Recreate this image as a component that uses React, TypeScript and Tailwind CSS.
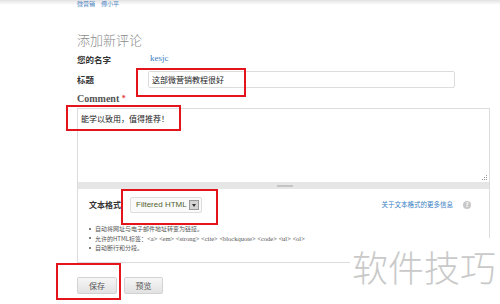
import React from "react";

const cjk = '"Noto Sans CJK SC", "Noto Sans", sans-serif';

const RedBox = ({ className }: { className: string }) => (
    <div className={`absolute border-2 border-[#e3141c] pointer-events-none ${className}`} />
);

const Row = ({ label, children, className = "" }: { label: string; children: React.ReactNode; className?: string }) => (
    <div className={`flex items-center ${className}`}>
        <div className="w-[71px] text-[8.5px] font-bold text-[#333]">{label}</div>
        {children}
    </div>
);

const App = () => {
    return (
        <div className="relative w-[500px] h-[304px] overflow-hidden bg-white" style={{ fontFamily: cjk }}>
            <div className="absolute left-0 top-0 w-full h-[5px] bg-gradient-to-b from-[#e2e2e2] to-white" />

            <div className="relative pl-[77px] pr-[10px]">
                <div className="h-[8px] leading-[8px] text-[6px] text-[#4a7fc1] flex items-center gap-[6px]">
                    <span>微营销</span>
                    <span>傅小平</span>
                </div>

                <h2 className="mt-[25px] text-[13px] leading-[14px] font-light text-[#8a8a8a]">添加新评论</h2>

                <Row label="您的名字" className="mt-[6px] h-[12px]">
                    <span className="ml-[2px] text-[9px] text-[#3b7fc4]" style={{ fontFamily: '"Liberation Serif", serif' }}>kesjc</span>
                </Row>

                <Row label="标题" className="mt-[6px] h-[17px]">
                    <div className="w-[307px] h-[17px] border border-[#dcdcdc] rounded-[2px] flex items-center pl-[3px] text-[8px] text-[#222]">
                        这部微营销教程很好
                    </div>
                </Row>

                <div className="mt-[5px] h-[12px] leading-[12px] text-[10px] font-bold text-[#555]" style={{ fontFamily: '"Liberation Serif", serif' }}>
                    Comment <span className="text-[#e0403a] text-[8px] align-top">*</span>
                </div>

                <div className="mt-[3px] w-[413px]">
                    <div className="relative h-[74px] border border-[#dcdcdc] border-b-0 pl-[3px] pt-[4px] text-[8px] text-[#222]">
                        能学以致用，值得推荐！
                        <div className="absolute right-[2px] bottom-[2px] grid grid-cols-3 gap-[1px]">
                            <span className="w-[1px] h-[1px]" />
                            <span className="w-[1px] h-[1px]" />
                            <span className="w-[1px] h-[1px] bg-[#999]" />
                            <span className="w-[1px] h-[1px]" />
                            <span className="w-[1px] h-[1px] bg-[#999]" />
                            <span className="w-[1px] h-[1px] bg-[#999]" />
                            <span className="w-[1px] h-[1px] bg-[#999]" />
                            <span className="w-[1px] h-[1px] bg-[#999]" />
                            <span className="w-[1px] h-[1px] bg-[#999]" />
                        </div>
                    </div>
                    <div className="h-[7px] bg-[#e6e6e6] border-x border-[#dcdcdc] flex items-center pl-[199px]">
                        <div className="w-[16px] h-[2px] bg-[#c4c4c4]" />
                    </div>

                    <div className="h-[74px] border border-t-0 border-[#dcdcdc] pl-[11px] pr-[18px] pt-[8px]">
                        <div className="flex items-center h-[16px]">
                            <span className="text-[8px] font-bold text-[#333] w-[41px]">文本格式</span>
                            <div className="w-[72px] h-[16px] border border-[#ddd] rounded-[2px] flex items-center justify-between pl-[5px] pr-[2px] bg-[#fafafa]">
                                <span className="whitespace-nowrap text-[8px] leading-[10px] text-[#51632f]" style={{ fontFamily: '"Liberation Sans", sans-serif' }}>Filtered HTML</span>
                                <span className="shrink-0 w-[10px] h-[10px] bg-[#d4d4d4] border border-[#999] flex items-center justify-center">
                                    <span className="w-0 h-0 border-x-[2.5px] border-x-transparent border-t-[3px] border-t-[#333]" />
                                </span>
                            </div>
                            <div className="ml-auto flex items-center gap-[10px]">
                                <span className="text-[6.5px] text-[#3b7fc4]">关于文本格式的更多信息</span>
                                <span className="w-[8px] h-[8px] rounded-full bg-[#c8c8c8] text-white text-[6px] leading-[8px] text-center font-bold">?</span>
                            </div>
                        </div>
                        <ul className="mt-[11px] text-[6px] leading-[9.5px] text-[#555]">
                            <li className="flex items-center gap-[4px]"><span className="w-[2px] h-[2px] rounded-full bg-[#555]" />自动将网址与电子邮件地址转变为链接。</li>
                            <li className="flex items-center gap-[4px]">
                                <span className="w-[2px] h-[2px] rounded-full bg-[#555]" />
                                <span>允许的HTML标签：<span style={{ fontFamily: '"Liberation Serif", serif' }} className="text-[6.5px]">&lt;a&gt; &lt;em&gt; &lt;strong&gt; &lt;cite&gt; &lt;blockquote&gt; &lt;code&gt; &lt;ul&gt; &lt;ol&gt;</span></span>
                            </li>
                            <li className="flex items-center gap-[4px]"><span className="w-[2px] h-[2px] rounded-full bg-[#555]" />自动断行和分段。</li>
                        </ul>
                    </div>
                </div>

                <div className="mt-[14px] flex gap-[7px]">
                    <button className="w-[40px] h-[17px] rounded-[2px] border border-[#d2d2d2] bg-gradient-to-b from-[#f6f6f6] to-[#e2e2e2] text-[8px] text-[#555]">保存</button>
                    <button className="w-[39px] h-[17px] rounded-[2px] border border-[#d2d2d2] bg-gradient-to-b from-[#f6f6f6] to-[#e2e2e2] text-[8px] text-[#555]">预览</button>
                </div>
            </div>

            <RedBox className="left-[136px] top-[68px] w-[110px] h-[29px]" />
            <RedBox className="left-[66px] top-[105px] w-[115px] h-[26px]" />
            <RedBox className="left-[121px] top-[189px] w-[97px] h-[36px]" />
            <RedBox className="left-[56px] top-[263px] w-[65px] h-[37px]" />

            <div className="absolute left-[350px] top-[238px] w-[150px] h-[66px] bg-white pl-[2px] pt-[6px] text-[36px] leading-[44px] font-light text-[#c9c9c9]">
                软件技巧
            </div>
        </div>
    );
};

export default App;
